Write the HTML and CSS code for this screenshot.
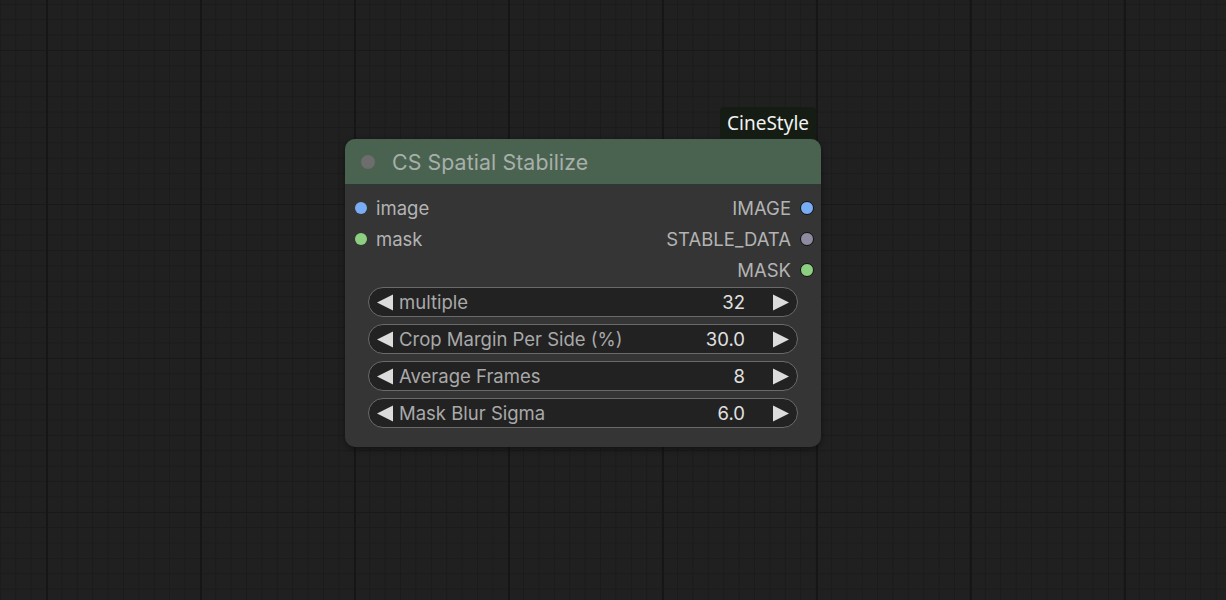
FILE: index.html
```
<!DOCTYPE html>
<html>
<head>
<meta charset="utf-8">
<link rel="stylesheet" href="styles.css">
</head>
<body>
<div class="canvas">
  <div class="node">
    <div class="badge">CineStyle</div>
    <div class="title">
      <span class="title-dot"></span>
      <span class="title-text">CS Spatial Stabilize</span>
    </div>
    <div class="body">
      <div class="slots">
        <div class="slot-row">
          <div class="in"><span class="dot blue"></span><span>image</span></div>
          <div class="out"><span>IMAGE</span><span class="dot blue ring"></span></div>
        </div>
        <div class="slot-row">
          <div class="in"><span class="dot green"></span><span>mask</span></div>
          <div class="out"><span>STABLE_DATA</span><span class="dot grey ring"></span></div>
        </div>
        <div class="slot-row short">
          <div class="in"></div>
          <div class="out"><span>MASK</span><span class="dot green ring"></span></div>
        </div>
      </div>
      <div class="widgets">
        <div class="widget">
          <svg class="arrow" viewBox="0 0 16 16"><polygon points="0,8 16,0 16,16"/></svg>
          <span class="label">multiple</span>
          <span class="value">32</span>
          <svg class="arrow" viewBox="0 0 16 16"><polygon points="16,8 0,0 0,16"/></svg>
        </div>
        <div class="widget">
          <svg class="arrow" viewBox="0 0 16 16"><polygon points="0,8 16,0 16,16"/></svg>
          <span class="label">Crop Margin Per Side (%)</span>
          <span class="value">30.0</span>
          <svg class="arrow" viewBox="0 0 16 16"><polygon points="16,8 0,0 0,16"/></svg>
        </div>
        <div class="widget">
          <svg class="arrow" viewBox="0 0 16 16"><polygon points="0,8 16,0 16,16"/></svg>
          <span class="label">Average Frames</span>
          <span class="value">8</span>
          <svg class="arrow" viewBox="0 0 16 16"><polygon points="16,8 0,0 0,16"/></svg>
        </div>
        <div class="widget">
          <svg class="arrow" viewBox="0 0 16 16"><polygon points="0,8 16,0 16,16"/></svg>
          <span class="label">Mask Blur Sigma</span>
          <span class="value">6.0</span>
          <svg class="arrow" viewBox="0 0 16 16"><polygon points="16,8 0,0 0,16"/></svg>
        </div>
      </div>
    </div>
  </div>
</div>
</body>
</html>
```
FILE: styles.css
```
html, body {
  margin: 0;
  padding: 0;
}
body {
  width: 1226px;
  height: 600px;
  overflow: hidden;
  font-family: Inter, "Noto Sans", sans-serif;
}
.canvas {
  position: relative;
  width: 1226px;
  height: 600px;
  background-color: #202020;
  background-image:
    linear-gradient(to right, #161616 0, #161616 2px, transparent 2px),
    linear-gradient(to bottom, #191919 0, #191919 1px, transparent 1px),
    linear-gradient(to right, #1b1b1b 0, #1b1b1b 1px, transparent 1px),
    linear-gradient(to bottom, #1b1b1b 0, #1b1b1b 1px, transparent 1px);
  background-size: 154px 154px, 154px 154px, 15.4px 15.4px, 15.4px 15.4px;
  background-position: 46px 0, 0 50px, 46px 0, 0 50px;
}
.node {
  position: absolute;
  left: 345px;
  top: 139px;
  width: 476px;
  height: 308px;
  background: #353535;
  border-radius: 10px;
  box-shadow: 0 2px 6px rgba(0,0,0,0.45);
  display: flex;
  flex-direction: column;
}
.badge {
  position: absolute;
  right: 5px;
  top: -32px;
  height: 32px;
  padding: 0 7px 0 7px;
  background: #141c14;
  color: #f2f2f2;
  font-family: "Noto Sans", "Open Sans", sans-serif;
  font-size: 19px;
  line-height: 32px;
  border-radius: 4px 4px 0 0;
}
.title {
  height: 46px;
  background: #4a6350;
  border-radius: 10px 10px 0 0;
  border-bottom: 1px solid #2e3a31;
  box-sizing: border-box;
  display: flex;
  align-items: center;
  padding-left: 16px;
}
.title-dot {
  width: 14px;
  height: 14px;
  border-radius: 50%;
  background: #6d6d6d;
  margin-right: 17px;
}
.title-text {
  color: #a8afaa;
  font-size: 21.3px;
  letter-spacing: 0.1px;
}
.body {
  display: flex;
  flex-direction: column;
  padding-top: 7px;
}
.slots {
  display: flex;
  flex-direction: column;
}
.slot-row {
  height: 31px;
  display: flex;
  justify-content: space-between;
  align-items: center;
  font-size: 18.5px;
  color: #b3b3b3;
}
.slot-row.short {
  height: 31px;
}
.in {
  display: flex;
  align-items: center;
  padding-left: 10px;
  gap: 9px;
}
.out {
  display: flex;
  align-items: center;
  padding-right: 7px;
  gap: 9px;
}
.dot {
  width: 12px;
  height: 12px;
  border-radius: 50%;
  box-sizing: border-box;
}
.dot.ring {
  border: 1.5px solid #111;
  width: 14px;
  height: 14px;
}
.blue { background: #78adf4; }
.green { background: #8ccf80; }
.grey { background: #8e8aa0; }
.widgets {
  display: flex;
  flex-direction: column;
  gap: 7px;
  margin: 2px 23px 0 23px;
}
.widget {
  height: 30px;
  box-sizing: border-box;
  border: 1.5px solid #6a6a6a;
  border-radius: 15px;
  background: #222222;
  display: flex;
  align-items: center;
  padding: 0 8px 0 8px;
  font-size: 18.5px;
}
.arrow {
  width: 16px;
  height: 17px;
  fill: #dcdcdc;
  flex: none;
}
.label {
  color: #a9a9a9;
  margin-left: 6px;
  flex: 1;
}
.value {
  color: #e0e0e0;
  margin-right: 28px;
}
```
